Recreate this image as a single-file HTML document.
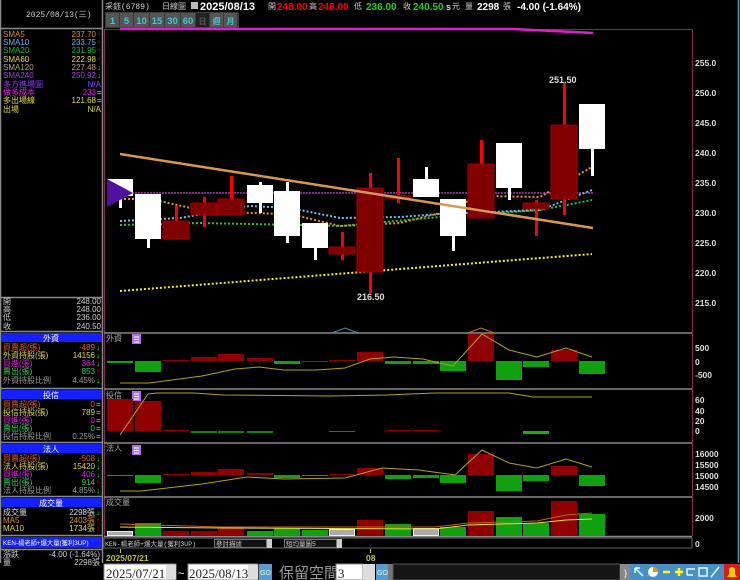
<!DOCTYPE html>
<html><head><meta charset="utf-8"><style>
html,body{margin:0;padding:0;background:#000;width:740px;height:580px;overflow:hidden}
svg{display:block}
text{font-family:"Liberation Sans","Noto Sans CJK TC",sans-serif}
.m{font-family:"Liberation Mono","Noto Sans CJK TC",monospace;font-size:8px}
.ax{font-family:"Liberation Sans",sans-serif;font-size:8.5px;fill:#ddd;font-weight:bold}
</style></head><body>
<svg width="740" height="580" viewBox="0 0 740 580" xmlns="http://www.w3.org/2000/svg">
<rect width="740" height="580" fill="#000"/>
<g stroke="#8a8a8a" stroke-width="1.5" fill="none">
<line x1="102.5" y1="0" x2="102.5" y2="563"/>
<line x1="0" y1="28.5" x2="102" y2="28.5"/>
<line x1="0" y1="297.5" x2="102" y2="297.5"/>
<line x1="0" y1="331.5" x2="102" y2="331.5"/>
<line x1="0" y1="388.5" x2="102" y2="388.5"/>
<line x1="0" y1="442.5" x2="102" y2="442.5"/>
<line x1="0" y1="496.5" x2="102" y2="496.5"/>
<line x1="0" y1="535.5" x2="102" y2="535.5"/>
<line x1="0" y1="549.5" x2="102" y2="549.5"/>
<line x1="0.5" y1="0" x2="0.5" y2="563"/>
</g>
<text x="26" y="17" class="m" fill="#ccc">2025/08/13(三)</text>
<g class="m">
<text x="3" y="37" fill="#d8902c">SMA5</text><text x="96" y="37" fill="#d8902c" text-anchor="end">237.70</text><text x="97" y="37" fill="#f00">↑</text>
<text x="3" y="45" fill="#6ab4e8">SMA10</text><text x="96" y="45" fill="#6ab4e8" text-anchor="end">233.75</text><text x="97" y="45" fill="#f00">↑</text>
<text x="3" y="53" fill="#20b830">SMA20</text><text x="96" y="53" fill="#20b830" text-anchor="end">231.95</text><text x="97" y="53" fill="#f00">↑</text>
<text x="3" y="62" fill="#e0d840">SMA60</text><text x="96" y="62" fill="#e0d840" text-anchor="end">222.98</text><text x="97" y="62" fill="#f00">↑</text>
<text x="3" y="70" fill="#b8a080">SMA120</text><text x="96" y="70" fill="#b8a080" text-anchor="end">227.48</text><text x="97" y="70" fill="#0f0">↓</text>
<text x="3" y="78" fill="#a040e0">SMA240</text><text x="96" y="78" fill="#a040e0" text-anchor="end">250.92</text><text x="97" y="78" fill="#0f0">↓</text>
<text x="3" y="87" fill="#8040ff">多方進場圖</text><text x="101" y="87" fill="#8040ff" text-anchor="end">N/A</text>
<text x="3" y="95" fill="#e020e0">做多成本</text><text x="96" y="95" fill="#e020e0" text-anchor="end">233</text><text x="97" y="95" fill="#ccc">=</text>
<text x="3" y="103" fill="#e0d840">多出場線</text><text x="96" y="103" fill="#e0d840" text-anchor="end">121.68</text><text x="97" y="103" fill="#ccc">=</text>
<text x="3" y="112" fill="#e0d840">出場</text><text x="101" y="112" fill="#e0d840" text-anchor="end">N/A</text>
<text x="3" y="304" fill="#ccc">開</text><text x="101" y="304" fill="#ccc" text-anchor="end">248.00</text>
<text x="3" y="312" fill="#ccc">高</text><text x="101" y="312" fill="#ccc" text-anchor="end">248.00</text>
<text x="3" y="320" fill="#ccc">低</text><text x="101" y="320" fill="#ccc" text-anchor="end">236.00</text>
<text x="3" y="329" fill="#ccc">收</text><text x="101" y="329" fill="#ccc" text-anchor="end">240.50</text>
</g>
<g fill="#1420ff"><rect x="1" y="333" width="101" height="9"/><rect x="1" y="390" width="101" height="9"/><rect x="1" y="444" width="101" height="9"/><rect x="1" y="498" width="101" height="9"/><rect x="1" y="537" width="101" height="11"/></g>
<g class="m" text-anchor="middle" fill="#fff"><text x="51" y="341">外資</text><text x="51" y="398">投信</text><text x="51" y="452">法人</text><text x="51" y="506">成交量</text></g>
<g class="m">
<text x="3" y="350" fill="#e05a20">買賣超(張)</text><text x="95" y="350" fill="#e05a20" text-anchor="end">-489</text><text x="96" y="350" fill="#0f0">↓</text>
<text x="3" y="358" fill="#e0d840">外資持股(張)</text><text x="95" y="358" fill="#e0d840" text-anchor="end">14156</text><text x="96" y="358" fill="#0f0">↓</text>
<text x="3" y="366" fill="#e020e0">買進(張)</text><text x="95" y="366" fill="#e020e0" text-anchor="end">364</text><text x="96" y="366" fill="#0f0">↓</text>
<text x="3" y="374" fill="#30d050">賣出(張)</text><text x="95" y="374" fill="#30d050" text-anchor="end">853</text><text x="96" y="374" fill="#f00">↑</text>
<text x="3" y="383" fill="#999">外資持股比例</text><text x="95" y="383" fill="#999" text-anchor="end">4.45%</text><text x="96" y="383" fill="#0f0">↓</text>
<text x="3" y="407" fill="#e05a20">買賣超(張)</text><text x="95" y="407" fill="#e05a20" text-anchor="end">0</text><text x="96" y="407" fill="#ccc">=</text>
<text x="3" y="415" fill="#e0d840">投信持股(張)</text><text x="95" y="415" fill="#e0d840" text-anchor="end">789</text><text x="96" y="415" fill="#ccc">=</text>
<text x="3" y="423" fill="#e020e0">買進(張)</text><text x="95" y="423" fill="#e020e0" text-anchor="end">0</text><text x="96" y="423" fill="#ccc">=</text>
<text x="3" y="431" fill="#30d050">賣出(張)</text><text x="95" y="431" fill="#30d050" text-anchor="end">0</text><text x="96" y="431" fill="#ccc">=</text>
<text x="3" y="439" fill="#999">投信持股比例</text><text x="95" y="439" fill="#999" text-anchor="end">0.25%</text><text x="96" y="439" fill="#ccc">=</text>
<text x="3" y="461" fill="#e05a20">買賣超(張)</text><text x="95" y="461" fill="#e05a20" text-anchor="end">-508</text><text x="96" y="461" fill="#0f0">↓</text>
<text x="3" y="469" fill="#e0d840">法人持股(張)</text><text x="95" y="469" fill="#e0d840" text-anchor="end">15420</text><text x="96" y="469" fill="#0f0">↓</text>
<text x="3" y="477" fill="#e020e0">買進(張)</text><text x="95" y="477" fill="#e020e0" text-anchor="end">406</text><text x="96" y="477" fill="#0f0">↓</text>
<text x="3" y="485" fill="#30d050">賣出(張)</text><text x="95" y="485" fill="#30d050" text-anchor="end">914</text><text x="96" y="485" fill="#f00">↑</text>
<text x="3" y="493" fill="#999">法人持股比例</text><text x="95" y="493" fill="#999" text-anchor="end">4.85%</text><text x="96" y="493" fill="#0f0">↓</text>
<text x="3" y="515" fill="#ddd">成交量</text><text x="95" y="515" fill="#ddd" text-anchor="end">2298張</text><text x="96" y="515" fill="#0f0">↓</text>
<text x="3" y="523" fill="#d8902c">MA5</text><text x="95" y="523" fill="#d8902c" text-anchor="end">2403張</text><text x="96" y="523" fill="#f00">↑</text>
<text x="3" y="531" fill="#e0d840">MA10</text><text x="95" y="531" fill="#e0d840" text-anchor="end">1734張</text><text x="96" y="531" fill="#f00">↑</text>
<text x="3" y="545" fill="#fff" style="font-size:6.3px">KEN-楊老師+爆大量(獲利3UP)</text>
<text x="3" y="557" fill="#ccc">漲跌</text><text x="100" y="557" fill="#ccc" text-anchor="end">-4.00 (-1.64%)</text>
<text x="3" y="565" fill="#ccc">量</text><text x="100" y="565" fill="#ccc" text-anchor="end">2298張</text>
</g>

<text x="105" y="9" class="m" fill="#ccc">采鈺(6789)</text>
<text x="162" y="9" class="m" fill="#ccc">日線圖</text>
<rect x="191" y="2" width="7" height="7" fill="#bbb"/>
<text x="200" y="10" font-size="11" font-weight="bold" fill="#fff">2025/08/13</text>
<text x="268" y="9" class="m" fill="#ccc">開</text><text x="277" y="10" font-size="10" font-weight="bold" fill="#f00">248.00</text>
<text x="309" y="9" class="m" fill="#ccc">高</text><text x="318" y="10" font-size="10" font-weight="bold" fill="#f00">248.00</text>
<text x="354" y="9" class="m" fill="#ccc">低</text><text x="366" y="10" font-size="10" font-weight="bold" fill="#2c2">236.00</text>
<text x="403" y="9" class="m" fill="#ccc">收</text><text x="413" y="10" font-size="10" font-weight="bold" fill="#2c2">240.50</text>
<text x="446" y="10" font-size="9" font-weight="bold" fill="#ddd">s</text><text x="452" y="9" class="m" fill="#ccc">元</text>
<text x="465" y="9" class="m" fill="#ccc">量</text><text x="477" y="10" font-size="10" font-weight="bold" fill="#fff">2298</text>
<text x="503" y="9" class="m" fill="#ccc">張</text>
<text x="517" y="10" font-size="10" font-weight="bold" fill="#fff">-4.00 (-1.64%)</text>
<g><rect x="105" y="12" width="134" height="16" fill="#3a3a3a"/>
<g fill="#555"><rect x="106" y="13" width="13" height="14"/><rect x="120" y="13" width="13" height="14"/><rect x="134" y="13" width="15" height="14"/><rect x="150" y="13" width="14" height="14"/><rect x="165" y="13" width="15" height="14"/><rect x="181" y="13" width="14" height="14"/><rect x="210" y="13" width="13" height="14"/><rect x="224" y="13" width="13" height="14"/></g>
<rect x="196" y="13" width="13" height="14" fill="#222"/>
<g font-size="9.5" font-weight="bold" fill="#40c8d0" text-anchor="middle"><text x="112.5" y="24">1</text><text x="126.5" y="24">5</text><text x="141.5" y="24">10</text><text x="157" y="24">15</text><text x="172.5" y="24">30</text><text x="188" y="24">60</text><text x="216.5" y="24" class="m">週</text><text x="230.5" y="24" class="m">月</text><text x="202.5" y="24" fill="#555" class="m">日</text></g></g>

<g stroke="#7a3050" stroke-width="1" fill="none"><line x1="104.5" y1="29" x2="104.5" y2="536"/><line x1="692.5" y1="29" x2="692.5" y2="536"/><line x1="104" y1="29.5" x2="692" y2="29.5"/></g>
<line x1="738.5" y1="0" x2="738.5" y2="563" stroke="#4aa0b0" stroke-width="1.5"/>
<polyline points="120,29 513,29 593,33" stroke="#e020d0" stroke-width="2.5" fill="none"/>
<g class="ax"><text x="695" y="66">255.0</text><text x="695" y="96">250.0</text><text x="695" y="126">245.0</text><text x="695" y="156">240.0</text><text x="695" y="186">235.0</text><text x="695" y="216">230.0</text><text x="695" y="246">225.0</text><text x="695" y="276">220.0</text><text x="695" y="306">215.0</text></g>

<line x1="120" y1="193" x2="593" y2="193" stroke="#b030c0" stroke-width="1.5" stroke-dasharray="2 1"/>
<polyline points="120,291 592,254" stroke="#f0f020" stroke-width="2" stroke-dasharray="2 2" fill="none"/>
<polyline points="120,225 200,223 300,225 340,226 440,217 540,210 592,200" stroke="#30c030" stroke-width="2" stroke-dasharray="2 2" fill="none"/>
<polyline points="120,221 180,218 250,206 290,208 340,218 400,217 440,214 540,210 592,190" stroke="#70c0f0" stroke-width="2" stroke-dasharray="2 2" fill="none"/>
<polyline points="120,199 150,199 200,210 250,213 290,214 340,226 400,223 440,213 480,196 540,197 592,167" stroke="#e89030" stroke-width="2" stroke-dasharray="2 2" fill="none"/>

<g>
<rect x="119" y="196" width="3" height="12" fill="#fff"/><rect x="107" y="179" width="26" height="17" fill="#fff"/>
<rect x="147" y="239" width="3" height="9" fill="#fff"/><rect x="135" y="194" width="26" height="45" fill="#fff"/>
<rect x="175" y="206" width="3" height="15" fill="#f00"/><rect x="163" y="221" width="26" height="18" fill="#800000" stroke="#a00000"/>
<rect x="203" y="197" width="3" height="30" fill="#f00"/><rect x="191" y="203" width="26" height="12" fill="#800000" stroke="#a00000"/>
<rect x="230" y="176" width="3" height="23" fill="#f00"/><rect x="218" y="199" width="26" height="16" fill="#800000" stroke="#a00000"/>
<rect x="259" y="182" width="3" height="31" fill="#fff"/><rect x="247" y="185" width="26" height="18" fill="#fff"/>
<rect x="286" y="182" width="3" height="61" fill="#fff"/><rect x="274" y="191" width="26" height="45" fill="#fff"/>
<rect x="314" y="248" width="3" height="12" fill="#fff"/><rect x="302" y="223" width="26" height="25" fill="#fff"/>
<rect x="341" y="232" width="3" height="28" fill="#f00"/><rect x="329" y="247" width="26" height="7" fill="#800000" stroke="#a00000"/>
<rect x="369" y="173" width="3" height="120" fill="#f00"/><rect x="357" y="188" width="26" height="84" fill="#800000" stroke="#a00000"/>
<rect x="397" y="158" width="3" height="45" fill="#f00"/><rect x="385" y="195" width="26" height="4" fill="#800000"/>
<rect x="425" y="167" width="3" height="12" fill="#fff"/><rect x="413" y="179" width="26" height="18" fill="#fff"/>
<rect x="452" y="236" width="3" height="15" fill="#fff"/><rect x="440" y="199" width="26" height="37" fill="#fff"/>
<rect x="480" y="140" width="3" height="24" fill="#f00"/><rect x="468" y="164" width="26" height="54" fill="#800000" stroke="#a00000"/>
<rect x="508" y="188" width="3" height="12" fill="#fff"/><rect x="496" y="143" width="26" height="45" fill="#fff"/>
<rect x="535" y="200" width="3" height="36" fill="#f00"/><rect x="523" y="203" width="26" height="6" fill="#800000" stroke="#a00000"/>
<rect x="563" y="83" width="3" height="132" fill="#f00"/><rect x="551" y="125" width="26" height="74" fill="#800000" stroke="#a00000"/>
<rect x="591" y="149" width="3" height="27" fill="#fff"/><rect x="579" y="104" width="26" height="45" fill="#fff"/>
</g>
<line x1="120" y1="154" x2="593" y2="228" stroke="#d89850" stroke-width="2.5"/>
<polygon points="107,179 107,207 133,193" fill="#5010a0"/>
<text x="549" y="83" font-size="9" font-weight="bold" fill="#ddd">251.50</text>
<text x="357" y="300" font-size="9" font-weight="bold" fill="#ddd">216.50</text>

<g stroke="#888" stroke-width="1.5"><line x1="104" y1="333" x2="692" y2="333"/><line x1="104" y1="389" x2="692" y2="389"/><line x1="104" y1="443" x2="692" y2="443"/><line x1="104" y1="497" x2="692" y2="497"/><line x1="104" y1="536.5" x2="692" y2="536.5"/></g>
<polyline points="332,333 345,328 358,333" stroke="#4090b0" fill="none"/>
<polyline points="468,333 481,328 494,333" stroke="#c07040" fill="none"/>
<g class="m" fill="#aaa"><text x="106" y="341">外資</text><text x="106" y="398">投信</text><text x="106" y="451">法人</text><text x="106" y="505">成交量</text></g>
<g fill="#b070e0"><rect x="132" y="334" width="9" height="10"/><rect x="132" y="391" width="9" height="10"/><rect x="132" y="445" width="9" height="10"/></g>
<g stroke="#fff" stroke-width="1"><line x1="134" y1="337" x2="139" y2="337"/><line x1="134" y1="339.5" x2="139" y2="339.5"/><line x1="134" y1="342" x2="139" y2="342"/><line x1="134" y1="394" x2="139" y2="394"/><line x1="134" y1="396.5" x2="139" y2="396.5"/><line x1="134" y1="399" x2="139" y2="399"/><line x1="134" y1="448" x2="139" y2="448"/><line x1="134" y1="450.5" x2="139" y2="450.5"/><line x1="134" y1="453" x2="139" y2="453"/></g>

<g fill="#10a010">
<rect x="107" y="361" width="26" height="2"/><rect x="135" y="361" width="26" height="11"/><rect x="274" y="361" width="26" height="3"/><rect x="302" y="361" width="26" height="1" fill="#0a600a"/><rect x="385" y="361" width="26" height="3"/><rect x="413" y="361" width="26" height="3"/><rect x="440" y="361" width="26" height="10"/><rect x="496" y="361" width="26" height="19"/><rect x="523" y="361" width="26" height="6"/><rect x="579" y="361" width="26" height="13"/>
</g>
<g fill="#900000">
<rect x="163" y="360" width="26" height="1"/><rect x="191" y="357" width="26" height="4"/><rect x="218" y="354" width="26" height="7"/><rect x="247" y="358" width="26" height="3"/><rect x="329" y="360" width="26" height="1"/><rect x="357" y="352" width="26" height="9"/><rect x="468" y="334" width="26" height="27"/><rect x="551" y="350" width="26" height="11"/>
</g>
<polyline points="120,383 149,383 202,376 235,369 259,367 284,370 317,370 345,368 370,359 394,357 423,359 439,363 453,366 482,334 509,350 537,357 566,348 592,357" stroke="#b0a020" stroke-width="1" fill="none"/>
<g class="ax"><text x="695" y="351">500</text><text x="695" y="365">0</text><text x="695" y="378">-500</text></g>

<g fill="#900000"><rect x="107" y="399" width="26" height="32"/><rect x="135" y="401" width="26" height="30"/><rect x="163" y="430" width="26" height="1"/><rect x="385" y="430" width="26" height="1"/><rect x="413" y="430" width="26" height="1"/></g>
<g fill="#108010"><rect x="191" y="431" width="26" height="2"/><rect x="218" y="431" width="26" height="2"/><rect x="247" y="431" width="26" height="2"/><rect x="329" y="431" width="26" height="1"/><rect x="523" y="431" width="26" height="3" fill="#10b010"/></g>
<polyline points="120,435 148,394 157,393 194,393 223,395 329,396 386,395 435,393 509,393 533,397 592,397" stroke="#b0a020" stroke-width="1" fill="none"/>
<g class="ax"><text x="695" y="403">60</text><text x="695" y="414">40</text><text x="695" y="424">20</text><text x="695" y="434">0</text></g>

<g fill="#10a010"><rect x="107" y="475" width="26" height="1"/><rect x="135" y="475" width="26" height="8"/><rect x="274" y="475" width="26" height="3"/><rect x="302" y="475" width="26" height="1"/><rect x="385" y="475" width="26" height="4"/><rect x="413" y="475" width="26" height="3"/><rect x="440" y="475" width="26" height="8"/><rect x="496" y="475" width="26" height="16"/><rect x="523" y="475" width="26" height="6"/><rect x="579" y="475" width="26" height="11"/></g>
<g fill="#900000"><rect x="163" y="474" width="26" height="1"/><rect x="191" y="472" width="26" height="3"/><rect x="218" y="469" width="26" height="6"/><rect x="247" y="473" width="26" height="2"/><rect x="329" y="474" width="26" height="1"/><rect x="357" y="468" width="26" height="7"/><rect x="468" y="454" width="26" height="21"/><rect x="551" y="466" width="26" height="9"/></g>
<polyline points="120,491 141,491 202,484 247,477 284,479 345,478 382,468 419,470 455,475 482,450 509,463 537,468 566,459 592,467" stroke="#b0a020" stroke-width="1" fill="none"/>
<g class="ax"><text x="695" y="457">16000</text><text x="695" y="468">15500</text><text x="695" y="479">15000</text><text x="695" y="490">14500</text></g>

<g fill="#10a010"><rect x="135" y="523" width="26" height="13"/><rect x="247" y="531" width="26" height="5"/><rect x="274" y="528" width="26" height="8"/><rect x="302" y="530" width="26" height="6"/><rect x="385" y="524" width="26" height="12"/><rect x="440" y="527" width="26" height="9"/><rect x="496" y="517" width="26" height="19"/><rect x="523" y="523" width="26" height="13"/><rect x="579" y="514" width="26" height="22"/></g>
<g fill="#900000"><rect x="163" y="531" width="26" height="5"/><rect x="191" y="531" width="26" height="5"/><rect x="218" y="527" width="26" height="9"/><rect x="357" y="520" width="26" height="16"/><rect x="468" y="511" width="26" height="25"/><rect x="551" y="501" width="26" height="35"/></g>
<g fill="#aaa" stroke="#eee"><rect x="107.5" y="531.5" width="25" height="4"/><rect x="329.5" y="529.5" width="25" height="6"/><rect x="413.5" y="528.5" width="25" height="7"/></g>
<polyline points="120,524 223,527 329,527 435,527 468,523 537,521 566,515 592,513" stroke="#c06020" stroke-width="1" fill="none"/>
<polyline points="120,527 223,528 435,529 468,525 537,523 566,520 592,519" stroke="#e0e040" stroke-width="1" fill="none"/>
<text x="695" y="521" class="ax">2000</text>

<rect x="104" y="538" width="588" height="10" fill="#000" stroke="#666"/>
<text x="105" y="546" class="m" fill="#ccc" style="font-size:6.5px">KEN-楊老師+爆大量(獲利3UP)</text>
<rect x="214.5" y="539.5" width="52" height="8" fill="#111" stroke="#777"/><text x="216" y="546" class="m" fill="#ccc" style="font-size:6.5px">參討描述</text><rect x="267" y="539" width="5" height="9" fill="#ccc"/>
<rect x="284.5" y="539.5" width="52" height="8" fill="#111" stroke="#777"/><text x="286" y="546" class="m" fill="#ccc" style="font-size:6.5px">短均量圖5</text><rect x="337" y="539" width="5" height="9" fill="#ccc"/>
<text x="695" y="547" class="ax">0</text>
<line x1="120.5" y1="549" x2="120.5" y2="553" stroke="#c0c040"/><line x1="370.5" y1="549" x2="370.5" y2="553" stroke="#c0c040"/>
<text x="106" y="561" font-size="8.5" font-weight="bold" fill="#c0c040">2025/07/21</text>
<text x="366" y="561" font-size="8.5" font-weight="bold" fill="#c0c040">08</text>

<rect x="104" y="564" width="72" height="16" fill="#fff" stroke="#888"/><text x="106" y="578" fill="#222" style="font-family:'Liberation Serif',serif;font-size:13px">2025/07/21</text><rect x="166" y="565" width="10" height="14" fill="#ddd"/>
<text x="178" y="577" font-size="11" fill="#fff">~</text>
<rect x="188" y="564" width="70" height="16" fill="#fff" stroke="#888"/><text x="189" y="578" fill="#222" style="font-family:'Liberation Serif',serif;font-size:13px">2025/08/13</text><rect x="248" y="565" width="10" height="14" fill="#ddd"/>
<rect x="259" y="564" width="13" height="16" fill="#5a9ad0"/><text x="260" y="575" font-size="7" fill="#cfe">GO</text>
<text x="279" y="578" fill="#999" style="font-family:'Noto Sans CJK TC',sans-serif;font-size:15px">保留空間</text>
<rect x="336" y="564" width="27" height="16" fill="#fff" stroke="#888"/><text x="338" y="578" fill="#222" style="font-family:'Liberation Serif',serif;font-size:13px">3</text><rect x="363" y="564" width="12" height="16" fill="#ddd"/>
<rect x="376" y="564" width="12" height="16" fill="#5a9ad0"/><text x="377" y="575" font-size="7" fill="#cfe">GO</text>
<rect x="388" y="564" width="5" height="16" fill="#777"/>
<rect x="393" y="564" width="227" height="16" fill="#151515" stroke="#555"/>
<rect x="620" y="564" width="10" height="16" fill="#888"/><text x="624" y="576" font-size="9" fill="#fff">)</text>
<rect x="630" y="564" width="94" height="16" fill="#4a8ec8"/>
<g stroke="#dff" stroke-width="1.5" fill="none"><path d="M635 568 L643 576 M635 568 L635 573 M635 568 L640 568"/><line x1="663" y1="572" x2="670" y2="572" stroke="#ff0" stroke-width="2.5"/><path d="M675 572 H683 M679 568 V576" stroke="#ff0" stroke-width="2.5"/><path d="M687 575 V569 H695 M687 575 H693"/><rect x="699" y="568" width="8" height="8"/><path d="M711 577 L719 567"/></g>
<circle cx="653" cy="572" r="5" fill="#fff"/><path d="M653 572 L653 567 A5 5 0 0 1 658 572Z" fill="#f80"/>
<rect x="724" y="564" width="16" height="16" fill="#d02020"/><path d="M727 577 H737 L735 574 V570 A3 3 0 0 0 729 570 V574Z" fill="#fc0"/>
</svg>
</body></html>
